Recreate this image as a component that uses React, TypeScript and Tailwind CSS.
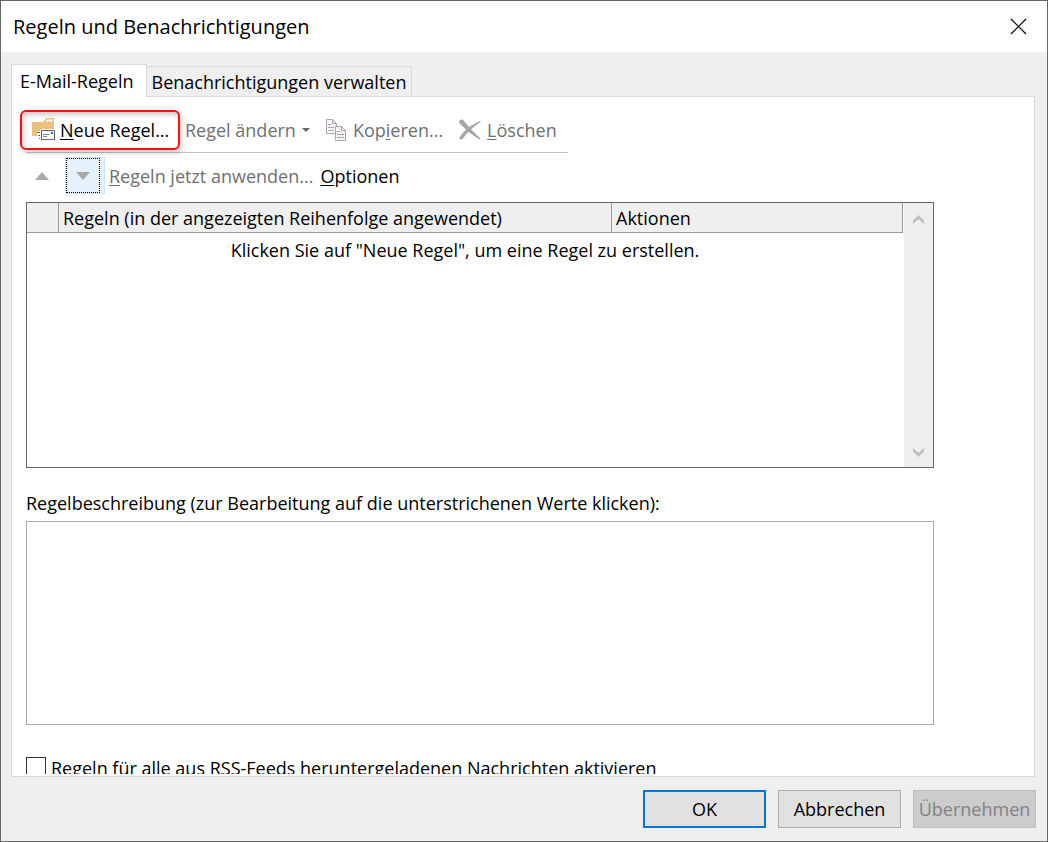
import { useState } from 'react';
import type { ReactNode } from 'react';

function FolderMailIcon() {
  return (
    <svg width="24" height="24" viewBox="0 0 24 24" aria-hidden="true">
      <path d="M0 4h11l3-4h8v18H0z" fill="#e8c17c" />
      <path d="M13.500 3.500 15 1.500h5.500v2z" fill="#fff" />
      <path d="M5 13h4v10H6v-4H5z" fill="#fff" />
      <path d="M5 14.500h3M6 17.500h2M7 20.500h1" stroke="#666" />
      <rect x="8" y="11" width="16" height="12" fill="#fff" />
      <rect x="9.500" y="12.500" width="13" height="9" fill="#fff" stroke="#666" />
      <path d="M11 16.500h6M11 18.500h4" stroke="#888" />
      <rect x="19" y="14" width="2" height="2" fill="#2b6cc4" />
    </svg>
  );
}

function CopyIcon() {
  return (
    <svg width="21" height="24" viewBox="0 0 21 24" fill="#f7f2f8" stroke="#aaa6ab" aria-hidden="true">
      <path d="M.5 1.500h6l4 4v10H.5z" />
      <path d="M6.500 1.500v4h4M2 6.500h3M2 9.500h6M2 12.500h6" fill="none" />
      <path d="M9.500 8.500h6l4 4v10h-10z" />
      <path d="M15.500 8.500v4h4M11 13.500h3M11 16.500h7M11 19.500h7" fill="none" />
    </svg>
  );
}

function DeleteIcon() {
  return (
    <svg width="22" height="22" viewBox="0 0 22 22" fill="#a6a6a6" aria-hidden="true">
      <path d="M.5 1.500C1.500.3 3.500.2 5 2c4.500 6 9.500 11 16.500 17.500l-.8 1C13 16 6 10 .8 4.500.1 3.500 0 2.500.5 1.500z" />
      <path d="M21.800 2.800C14.500 7.500 8.500 13 4 19.500c-1 1.300-4 1.300-3.700-.8C4.500 12 12 5.500 21.200 2z" />
    </svg>
  );
}

interface ToolButtonProps {
  disabled?: boolean;
  className?: string;
  children: ReactNode;
}

function ToolButton({ disabled, className = '', children }: ToolButtonProps) {
  return (
    <button
      type="button"
      disabled={disabled}
      className={`flex items-center whitespace-nowrap ${disabled ? 'text-[#707070]' : 'text-black'} ${className}`}
    >
      {children}
    </button>
  );
}

function Key({ children }: { children: ReactNode }) {
  return <span className="underline decoration-1 underline-offset-2">{children}</span>;
}

export default function App() {
  const [activeTab, setActiveTab] = useState<'rules' | 'alerts'>('rules');
  const [rssEnabled, setRssEnabled] = useState(false);

  return (
    <main className="flex h-screen flex-col border border-[#666] bg-[#efefef] font-['Open_Sans','Noto_Sans',sans-serif] text-[18px] leading-6 text-black">
      {/* Title bar */}
      <header className="flex h-[51px] shrink-0 items-center justify-between bg-white pr-5 pl-3">
        <h1 className="text-[20px]">Regeln und Benachrichtigungen</h1>
        <button type="button" aria-label="Schließen">
          <svg width="17" height="17" viewBox="0 0 17 17" fill="none" stroke="#000" strokeWidth="1.200">
            <path d="M1 1l15 15M16 1 1 16" />
          </svg>
        </button>
      </header>

      {/* Tabs */}
      <div role="tablist" className="flex shrink-0 items-end px-[10px] pt-3">
        <button
          type="button"
          role="tab"
          aria-selected={activeTab === 'rules'}
          onClick={() => setActiveTab('rules')}
          className="relative z-10 -mb-px h-[33px] w-[136px] border border-b-0 border-[#d9d9d9] bg-white pb-px pl-2 text-left whitespace-nowrap"
        >
          E-Mail-Regeln
        </button>
        <button
          type="button"
          role="tab"
          aria-selected={activeTab === 'alerts'}
          onClick={() => setActiveTab('alerts')}
          className="h-[30px] w-[265px] border border-b-0 border-l-0 border-[#d9d9d9] whitespace-nowrap"
        >
          Benachrichtigungen verwalten
        </button>
      </div>

      <section className="mr-3 ml-[10px] min-h-0 flex-1 border border-[#d9d9d9] bg-white pb-[2px]">
        <div className="h-full overflow-hidden pt-[13px] pr-[100px] pl-[14px]">
          {/* Toolbar */}
          <div className="flex h-[43px] w-[542px] items-start border-b border-[#c3c3c3]">
            <ToolButton className="-ml-[6px] h-10 w-[160px] shrink-0 gap-1 rounded-md border-2 border-[#fa0f14] pl-[10px] shadow-[2px_3px_5px_rgba(0,0,0,0.2),inset_2px_3px_5px_rgba(0,0,0,0.2)]">
              <FolderMailIcon />
              <span><Key>N</Key>eue Regel...</span>
            </ToolButton>
            <ToolButton disabled className="ml-[5px] h-10 gap-[6px]">
              <span>Re<Key>g</Key>el ändern</span>
              <svg width="8" height="4" viewBox="0 0 8 4" fill="#666"><path d="M0 0h8L4 4z" /></svg>
            </ToolButton>
            <ToolButton disabled className="ml-4 h-10 gap-[6px]">
              <CopyIcon />
              <span>Kop<Key>i</Key>eren...</span>
            </ToolButton>
            <ToolButton disabled className="ml-4 h-10 gap-[6px]">
              <DeleteIcon />
              <span><Key>L</Key>öschen</span>
            </ToolButton>
          </div>

          <div className="flex h-[45px] items-center">
            <button type="button" disabled aria-label="Nach oben" className="flex w-8 justify-center">
              <svg width="14" height="8" viewBox="0 0 14 8" fill="#a9a9a9"><path d="M0 8h14L7 0z" /></svg>
            </button>
            <button type="button" aria-label="Nach unten" className="ml-[7px] flex h-[37px] w-10 border border-[#cce4f7] bg-[#e5f1fb]">
              <span className="flex h-[35px] w-[34px] items-center justify-center border border-dotted border-black">
                <svg width="14" height="8" viewBox="0 0 14 8" fill="#a9a9a9"><path d="M0 0h14L7 8z" /></svg>
              </span>
            </button>
            <ToolButton disabled className="ml-1">
              <span><Key>R</Key>egeln jetzt anwenden...</span>
            </ToolButton>
            <ToolButton className="ml-[7px]">
              <span><Key>O</Key>ptionen</span>
            </ToolButton>
          </div>

          {/* Rule list */}
          <div className="mt-1 flex h-[266px] border border-[#666]">
            <div className="min-w-0 flex-1 pr-px">
              <table className="w-full table-fixed border-separate border-spacing-0">
                <thead>
                  <tr className="h-[30px] bg-[#efefef] text-left">
                    <th className="w-8 border-r border-b border-[#999]" aria-label="Aktiv" />
                    <th className="border-r border-b border-[#999] px-1 font-normal">Regeln (in der angezeigten Reihenfolge angewendet)</th>
                    <th className="w-[291px] border-r border-b border-[#999] px-1 font-normal">Aktionen</th>
                  </tr>
                </thead>
                <tbody>
                  <tr className="h-[34px]">
                    <td colSpan={3} className="text-center">Klicken Sie auf "Neue Regel", um eine Regel zu erstellen.</td>
                  </tr>
                </tbody>
              </table>
            </div>
            <div className="flex w-[29px] flex-col items-center justify-between bg-[#efefef] pt-3 pb-[10px]">
              <svg width="11" height="9" viewBox="0 0 11 9" fill="#bfbfbf"><path d="M0 5.500 5.500 0 11 5.500V9L5.500 4 0 9z" /></svg>
              <svg width="11" height="9" viewBox="0 0 11 9" fill="#bfbfbf"><path d="M0 3.500 5.500 9 11 3.500V0L5.500 5 0 0z" /></svg>
            </div>
          </div>

          <label htmlFor="description" className="mt-[23px] block whitespace-nowrap">
            Regelbeschreibung (zur Bearbeitung auf die unterstrichenen Werte klicken):
          </label>
          <textarea id="description" readOnly className="mt-[6px] block h-[204px] w-full resize-none border border-[#aaa] bg-white" />

          <div className="mt-8 flex items-start gap-[5px]">
            <input
              id="rss"
              type="checkbox"
              checked={rssEnabled}
              onChange={(e) => setRssEnabled(e.target.checked)}
              className="size-5 shrink-0 appearance-none border border-[#333] bg-white checked:bg-[#0078d7]"
            />
            <label htmlFor="rss" className="leading-[22px] whitespace-nowrap">
              Regeln für alle aus RSS-Feeds heruntergeladenen Nachrichten aktivieren
            </label>
          </div>
        </div>
      </section>

      <footer className="flex shrink-0 justify-end gap-3 px-[11px] py-[13px]">
        <button type="button" className="h-[38px] w-[123px] border-2 border-[#0078d7] bg-[#e1e1e1]">OK</button>
        <button type="button" className="h-[38px] w-[123px] border border-[#adadad] bg-[#e1e1e1]">Abbrechen</button>
        <button type="button" disabled className="h-[38px] w-[123px] border border-[#bfbfbf] bg-[#ccc] text-[#838383]">Übernehmen</button>
      </footer>
    </main>
  );
}
